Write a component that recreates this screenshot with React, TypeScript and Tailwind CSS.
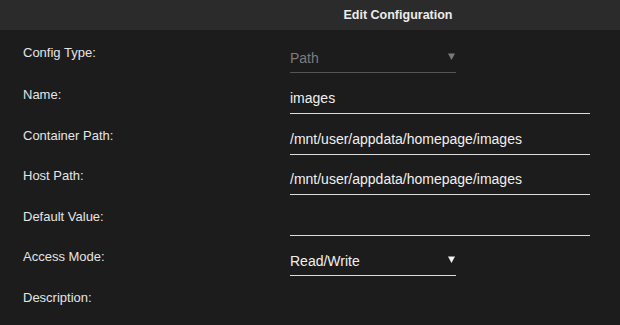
import React from "react";

// Types
interface Field {
  label: string;
  value?: string;
  kind: "text" | "select" | "none";
}

const fields: Field[] = [
  { label: "Name:", value: "images", kind: "text" },
  { label: "Container Path:", value: "/mnt/user/appdata/homepage/images", kind: "text" },
  { label: "Host Path:", value: "/mnt/user/appdata/homepage/images", kind: "text" },
  { label: "Default Value:", value: "", kind: "text" },
  { label: "Access Mode:", value: "Read/Write", kind: "select" },
  { label: "Description:", kind: "none" },
];

const Caret = ({ muted }: { muted?: boolean }) => (
  <svg width="7" height="7" viewBox="0 0 7 7" className="mt-[4px]">
    <polygon points="0,0.5 7,0.5 3.5,7" fill={muted ? "#7a7a7a" : "#f2f2f2"} />
  </svg>
);

const Row = ({ field }: { field: Field }) => {
  return (
    <div className="flex items-start h-[40.5px]">
      <div className="w-[267px] text-[13px] leading-[18px] text-[#e4e4e4]">{field.label}</div>
      {field.kind === "text" && (
        <div className="w-[300px] h-[28px] border-b border-[#dcdcdc] pt-[3px] text-[14px] leading-[18px] text-[#f0f0f0]">
          {field.value}
        </div>
      )}
      {field.kind === "select" && (
        <div className="w-[166px] h-[28px] border-b border-[#dcdcdc] pt-[4px] pr-[1px] flex items-start justify-between text-[14px] leading-[18px] text-[#f0f0f0]">
          <span>{field.value}</span>
          <Caret />
        </div>
      )}
    </div>
  );
};

export default function App() {
  return (
    <div
      className="w-[620px] h-[325px] bg-[#1c1c1c] overflow-hidden"
      style={{ fontFamily: '"Liberation Sans", Arial, sans-serif' }}
    >
      {/* Header */}
      <div className="h-[30px] bg-[#2b2b2b] flex items-center justify-center pl-[176px]">
        <span className="text-[12.5px] font-bold text-[#ececec]">Edit Configuration</span>
      </div>

      {/* Form */}
      <div className="pl-[23px] pt-[14px]">
        <div className="flex items-start h-[42px]">
          <div className="w-[267px] text-[13px] leading-[18px] text-[#e4e4e4]">Config Type:</div>
          <div className="w-[166px] h-[29px] border-b border-[#555555] pt-[5px] pr-[1px] flex items-start justify-between text-[14px] leading-[18px] text-[#7d7d7d]">
            <span>Path</span>
            <Caret muted />
          </div>
        </div>
        {fields.map((f) => (
          <Row key={f.label} field={f} />
        ))}
      </div>
    </div>
  );
}
